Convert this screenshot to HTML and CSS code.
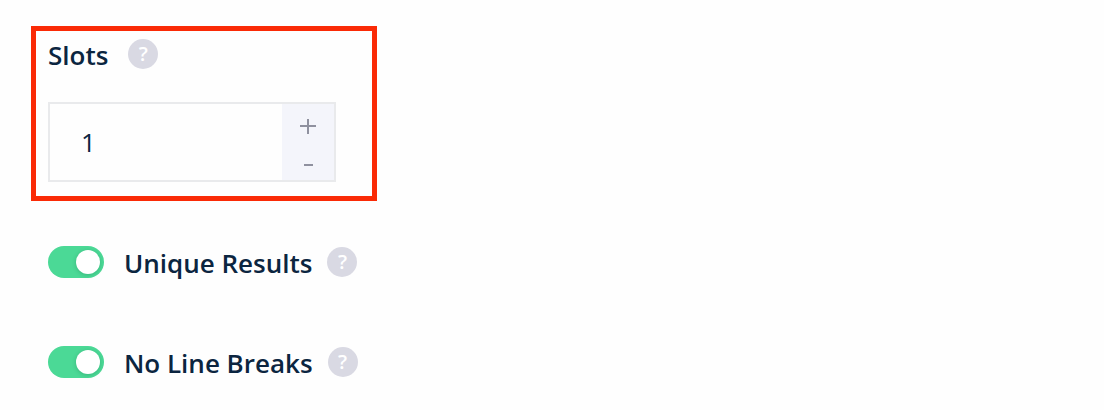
FILE: index.html
```html
<!DOCTYPE html>
<html lang="en">
<head>
	<meta charset="UTF-8">
	<title>Slots</title>
	<link rel="stylesheet" href="styles.css">
</head>
<body>

	<form class="settings">
		<div class="field">
			<div class="head">
				<label class="label" for="slots">Slots</label>
				<button type="button" class="help" aria-label="About slots">?</button>
			</div>
			<div class="number">
				<input type="text" inputmode="numeric" id="slots" value="1">
				<div class="steps">
					<button type="button" aria-label="Increase">
						<svg width="16" height="16" viewBox="0 0 16 16"><path d="M8 1v15M0 8h16"/></svg>
					</button>
					<button type="button" aria-label="Decrease">
						<svg width="16" height="16" viewBox="0 0 16 16"><path d="M4 9h9"/></svg>
					</button>
				</div>
			</div>
		</div>

		<div class="option">
			<input type="checkbox" class="toggle" id="unique" checked>
			<label class="label" for="unique">Unique Results</label>
			<button type="button" class="help" aria-label="About unique results">?</button>
		</div>

		<div class="option">
			<input type="checkbox" class="toggle" id="breaks" checked>
			<label class="label" for="breaks">No Line Breaks</label>
			<button type="button" class="help" aria-label="About line breaks">?</button>
		</div>
	</form>

</body>
</html>
```
FILE: styles.css
```css
* {padding: 0; margin: 0; box-sizing: border-box;}
body {background: #fefefe; color: #0b2540; font-family: "Segoe UI", "Open Sans", "Noto Sans", sans-serif;}
button {border: none; background: none; font-family: inherit; cursor: pointer;}

.settings {padding: 26px 31px;}
.label {padding-top: 2px; font-size: 26px; line-height: 30px; font-weight: 600;}
.help {width: 30px; height: 30px; border-radius: 50%; background: #d9d9e3; color: #fff; font-size: 20px; line-height: 30px; font-weight: 600; text-align: center;}

.field {max-width: 346px; padding: 7px 12px 14px; border: 5px solid #fa2a06;}
.head {display: flex; align-items: center; gap: 20px; margin-bottom: 32px;}

.number {display: flex; max-width: 288px; height: 80px; border: 2px solid #e9eaec;}
.number input {flex: 1; min-width: 0; padding: 0 31px; border: none; outline: none; background: none; color: inherit; font-family: inherit; font-size: 26px;}
.steps {display: flex; flex-direction: column; width: 52px; background: #f4f5fb;}
.steps button {flex: 1; display: flex; align-items: center; justify-content: center; padding-top: 6px;}
.steps svg {fill: none; stroke: #8f919f; stroke-width: 2;}

.option {display: flex; align-items: center; margin-top: 45px; padding-left: 17px;}
.option + .option {margin-top: 68px;}
.option .label {margin: 0 15px 0 20px;}

.toggle {appearance: none; display: flex; justify-content: flex-end; width: 56px; height: 32px; padding: 4px; border-radius: 16px; background: #4bd996; cursor: pointer;}
.toggle::before {content: ""; width: 24px; height: 24px; border-radius: 50%; background: #fff; box-shadow: 0 1px 4px rgba(0, 80, 50, .25);}
.toggle:not(:checked) {justify-content: flex-start; background: #d9d9e3;}
```
